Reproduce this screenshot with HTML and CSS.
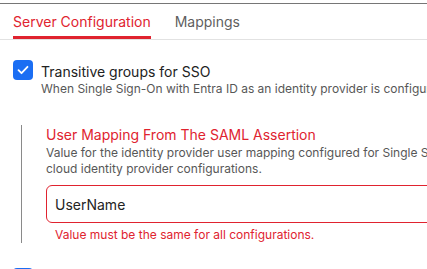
FILE: index.html
```html
<!DOCTYPE html>
<html lang="en">
<head>
<meta charset="utf-8">
<title>Server Configuration</title>
<link rel="stylesheet" href="styles.css">
</head>
<body>
<div class="frame">
  <nav class="tabs">
    <div class="tab active">Server Configuration</div>
    <div class="tab">Mappings</div>
  </nav>
  <main class="content">
    <div class="check-row">
      <span class="checkbox">
        <svg width="20" height="20" viewBox="0 0 20 20"><path d="M5.5 10.2l3 3 6-6.4" fill="none" stroke="#fff" stroke-width="1.8" stroke-linecap="round" stroke-linejoin="round"/></svg>
      </span>
      <div class="check-text">
        <div class="label">Transitive groups for SSO</div>
        <div class="desc nowrap">When Single Sign-On with Entra ID as an identity provider is configured, include transitive group memberships.</div>
      </div>
    </div>
    <section class="sub">
      <div class="sub-title">User Mapping From The SAML Assertion</div>
      <div class="desc">
        <span class="line">Value for the identity provider user mapping configured for Single Sign-On. It must match across all</span>
        <span class="line">cloud identity provider configurations.</span>
      </div>
      <div class="input">UserName</div>
      <div class="error">Value must be the same for all configurations.</div>
    </section>
    <div class="check-row next">
      <span class="checkbox"></span>
    </div>
  </main>
</div>
</body>
</html>
```
FILE: styles.css
```css
html, body {
  margin: 0;
  padding: 0;
  background: #fff;
  overflow: hidden;
}
body {
  font-family: Inter, "Noto Sans", sans-serif;
  color: #232323;
  width: 760px;
}
.frame {
  margin-top: 3px;
  border-top: 1px solid #767676;
}
.tabs {
  display: flex;
  gap: 24px;
  padding: 0 13px;
  border-bottom: 1px solid #e2e2e2;
}
.tab {
  font-size: 14px;
  line-height: 20px;
  padding-top: 8px;
  padding-bottom: 4px;
  border-bottom: 3px solid transparent;
  color: #5f5f5f;
}
.tab.active {
  color: #e0232f;
  border-bottom-color: #e0232f;
}
.content {
  padding: 20px 0 0 13px;
}
.check-row {
  display: flex;
  gap: 8px;
  align-items: flex-start;
}
.checkbox {
  width: 20px;
  height: 20px;
  border-radius: 4px;
  background: #1b6ef3;
  flex: none;
  display: block;
}
.checkbox svg { display: block; }
.label {
  font-size: 14px;
  line-height: 20px;
  margin-top: 2px;
  margin-bottom: -1px;
  color: #222;
}
.desc {
  font-size: 12px;
  line-height: 16px;
  color: #575757;
}
.nowrap { white-space: nowrap; }
.line { display: block; white-space: nowrap; }
.sub {
  margin: 28px 0 0 8px;
  border-left: 1px solid #8a8a8a;
  padding-left: 24px;
}
.sub-title {
  font-size: 14px;
  line-height: 20px;
  color: #e0232f;
}
.input {
  margin-top: 8px;
  height: 36px;
  border: 1px solid #e0232f;
  border-radius: 6px;
  padding-left: 8px;
  font-size: 14px;
  line-height: 37px;
  color: #232323;
}
.error {
  margin-top: 4px;
  padding-left: 9px;
  font-size: 12px;
  line-height: 16px;
  color: #e0232f;
}
.next {
  margin-top: 25px;
}
```
